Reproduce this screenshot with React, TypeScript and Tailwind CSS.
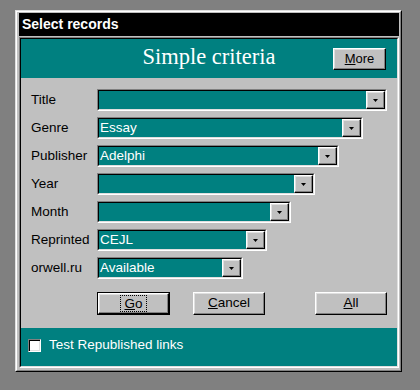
import React from "react";

const raised =
  "border border-t-white border-l-white border-r-black border-b-black shadow-[inset_-1px_-1px_#808080,inset_1px_1px_#dfdfdf] bg-[#c0c0c0]";

function Combo({ width, value }: { width: number; value?: string }) {
  return (
    <div
      className="h-[22px] flex border border-t-[#808080] border-l-[#808080] border-r-white border-b-white"
      style={{ width }}
    >
      <div className="flex-1 flex border border-t-black border-l-black border-r-[#dfdfdf] border-b-[#dfdfdf]">
        <div className="flex-1 bg-[#008080] text-white text-[13.5px] leading-[18px] pl-px">
          {value}
        </div>
        <div className={"w-[19px] h-full flex items-center justify-center " + raised}>
          <svg width="5" height="3" viewBox="0 0 5 3">
            <polygon points="0,0 5,0 2.5,3" fill="#000" />
          </svg>
        </div>
      </div>
    </div>
  );
}

const rows: { label: string; width: number; value?: string }[] = [
  { label: "Title", width: 290 },
  { label: "Genre", width: 266, value: "Essay" },
  { label: "Publisher", width: 242, value: "Adelphi" },
  { label: "Year", width: 218 },
  { label: "Month", width: 194 },
  { label: "Reprinted", width: 170, value: "CEJL" },
  { label: "orwell.ru", width: 146, value: "Available" },
];

export default function App() {
  return (
    <div
      className="w-[420px] h-[390px] bg-[#808080] pl-[15px] pt-[10px]"
      style={{ fontFamily: '"Liberation Sans", Arial, sans-serif' }}
    >
      <div className="w-[387px] h-[362px] flex border border-t-[#dfdfdf] border-l-[#dfdfdf] border-r-black border-b-black">
        <div className="flex-1 flex flex-col bg-[#c0c0c0] border border-t-white border-l-white border-r-[#808080] border-b-[#808080] pt-px pl-[2px] pr-px pb-[2px]">
          <div className="h-[23px] bg-black text-white font-bold text-[14px] flex items-center pl-[3px]">
            Select records
          </div>
          <div className="mt-px flex-1 flex border border-t-[#808080] border-l-[#808080] border-r-white border-b-white">
            <div className="flex-1 flex flex-col border border-t-black border-l-black border-r-[#dfdfdf] border-b-[#dfdfdf]">
              <div className="h-[39px] bg-[#008080] grid grid-cols-[1fr_auto_1fr] items-center">
                <div />
                <div
                  className="text-white text-[22.5px] leading-none pb-[2px]"
                  style={{ fontFamily: '"Liberation Serif", "Times New Roman", serif' }}
                >
                  Simple criteria
                </div>
                <div className="flex justify-end pr-[11px]">
                  <div className={"w-[53px] h-[22px] flex items-center justify-center text-[13px] text-black " + raised}>
                    <span>
                      <u>M</u>ore
                    </span>
                  </div>
                </div>
              </div>
              <div className="flex-1 bg-[#c0c0c0] pl-[10px] pr-[10px] pt-[11px] flex flex-col">
                <div className="flex flex-col gap-[6px]">
                  {rows.map((r) => (
                    <div key={r.label} className="flex items-center">
                      <div className="w-[66px] text-[13.5px] text-black">{r.label}</div>
                      <Combo width={r.width} value={r.value} />
                    </div>
                  ))}
                </div>
                <div className="flex mt-[13px] pl-[66px] text-[13.5px] text-black">
                  <div className="w-[73px] h-[23px] border border-black flex">
                    <div className={"flex-1 flex items-center justify-center " + raised}>
                      <span className="outline outline-1 outline-dotted outline-black px-[3px] leading-[15px]">
                        <u>G</u>o
                      </span>
                    </div>
                  </div>
                  <div className={"ml-[23px] w-[72px] h-[23px] flex items-center justify-center " + raised}>
                    <span>
                      <u>C</u>ancel
                    </span>
                  </div>
                  <div className={"ml-auto w-[72px] h-[23px] flex items-center justify-center " + raised}>
                    <span>
                      <u>A</u>ll
                    </span>
                  </div>
                </div>
              </div>
              <div className="h-[38px] bg-[#008080] flex items-center pl-[7px] pb-[3px]">
                <div className="w-[13px] h-[13px] bg-white border border-t-[#808080] border-l-[#808080] border-r-white border-b-white shadow-[inset_1px_1px_#000,inset_-1px_-1px_#dfdfdf]" />
                <span className="ml-[8px] text-white text-[13.5px]">Test Republished links</span>
              </div>
            </div>
          </div>
        </div>
      </div>
    </div>
  );
}
